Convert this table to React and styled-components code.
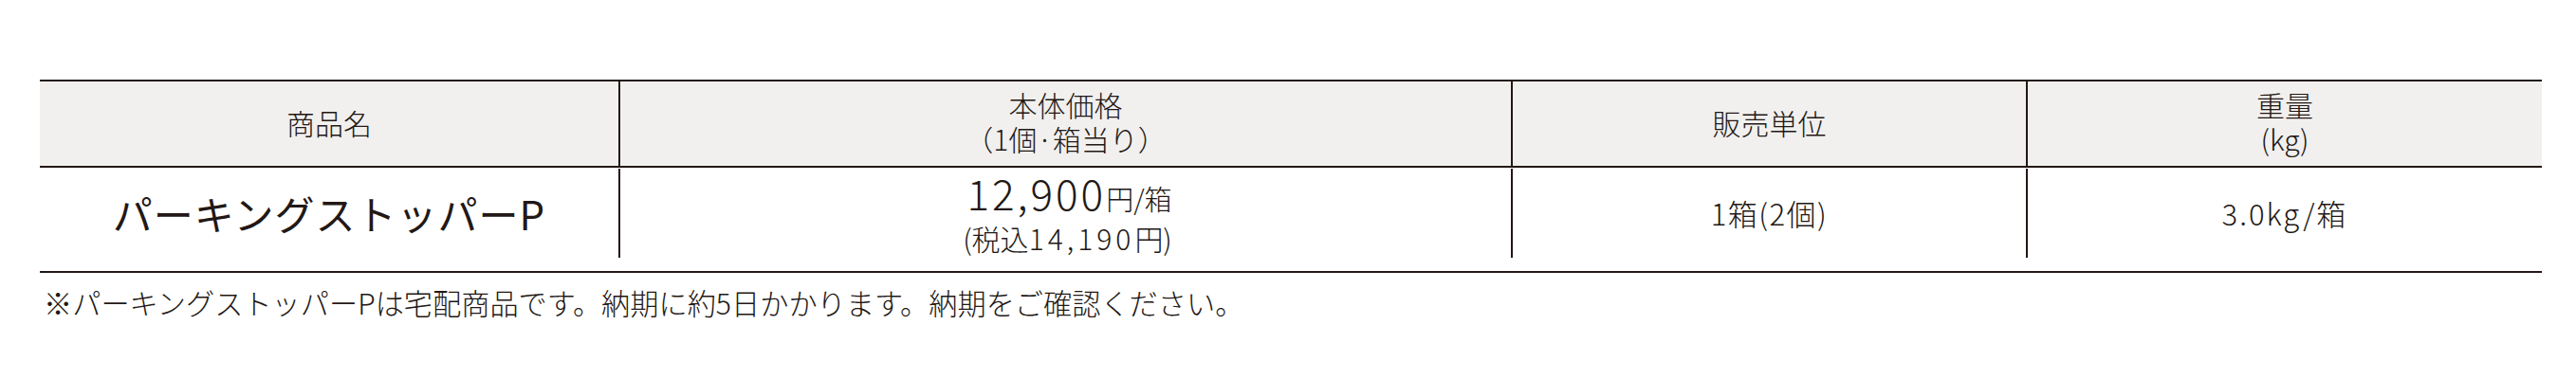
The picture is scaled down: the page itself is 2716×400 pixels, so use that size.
import React from 'react';
import styled, { createGlobalStyle } from 'styled-components';

const GlobalStyle = createGlobalStyle`
    html, body {
        margin: 0;
        padding: 0;
        background: #ffffff;
    }
    body {
        font-family: "Noto Sans CJK JP", "Noto Sans", sans-serif;
        color: #231815;
    }
`;

const Page = styled.div`
    width: 2716px;
    height: 400px;
    padding: 84px 0 0 42px;
    box-sizing: border-box;
`;

const Table = styled.div`
    width: 2638px;
    border-top: 2px solid #231815;
    border-bottom: 2px solid #231815;
`;

const Row = styled.div`
    display: grid;
    grid-template-columns: 610px 941px 543px 544px;
    background: ${(p) => (p.$head ? '#f1f0ef' : '#ffffff')};
    height: ${(p) => (p.$head ? '89px' : '94px')};
    padding-bottom: ${(p) => (p.$head ? '0' : '14px')};
    border-bottom: ${(p) => (p.$head ? '2px solid #231815' : 'none')};
    padding-top: ${(p) => (p.$head ? '0' : '1px')};
`;

const Cell = styled.div`
    display: flex;
    flex-direction: column;
    align-items: center;
    justify-content: center;
    text-align: center;
    border-left: ${(p) => (p.$first ? 'none' : '2px solid #231815')};
    font-weight: 300;
    font-size: ${(p) => p.$size || '30px'};
    line-height: 36px;
    letter-spacing: ${(p) => p.$ls || '0'};
    padding-bottom: ${(p) => p.$lift || '0'};
    white-space: nowrap;
`;

const HeadLine = styled.div`
    height: 36px;
`;

const ProductName = styled.span`
    font-size: 42px;
    font-weight: 400;
    line-height: 46px;
    letter-spacing: 1px;
`;

const PriceLine = styled.div`
    display: flex;
    align-items: baseline;
    line-height: 46px;
    padding-left: 8px;
`;

const BigNum = styled.span`
    font-size: 44px;
    letter-spacing: 3px;
    font-weight: 300;
`;

const Unit = styled.span`
    font-size: 29px;
    font-weight: 300;
`;

const TaxLine = styled.div`
    font-size: 30px;
    line-height: 38px;
    font-weight: 300;
    padding-left: 4px;
`;

const TaxNum = styled.span`
    letter-spacing: 4px;
`;

const Note = styled.p`
    margin: 12px 0 0 4px;
    font-size: 30.2px;
    font-weight: 300;
    line-height: 38px;
    white-space: nowrap;
`;

export default function App() {
    return (
        <>
            <GlobalStyle />
            <Page>
                <Table>
                    <Row $head>
                        <Cell $first $lift="3px">商品名</Cell>
                        <Cell $lift="5px">
                            <HeadLine>本体価格</HeadLine>
                            <HeadLine>（1個·箱当り）</HeadLine>
                        </Cell>
                        <Cell $lift="3px">販売単位</Cell>
                        <Cell $lift="5px">
                            <HeadLine>重量</HeadLine>
                            <HeadLine>(kg)</HeadLine>
                        </Cell>
                    </Row>
                    <Row>
                        <Cell $first>
                            <ProductName>パーキングストッパーP</ProductName>
                        </Cell>
                        <Cell>
                            <PriceLine>
                                <BigNum>12,900</BigNum>
                                <Unit>円/箱</Unit>
                            </PriceLine>
                            <TaxLine>
                                (税込<TaxNum>14,190</TaxNum>円)
                            </TaxLine>
                        </Cell>
                        <Cell $size="31px" $ls="1.5px">1箱(2個)</Cell>
                        <Cell $size="31px" $ls="2px">3.0kg/箱</Cell>
                    </Row>
                </Table>
                <Note>※パーキングストッパーPは宅配商品です。納期に約5日かかります。納期をご確認ください。</Note>
            </Page>
        </>
    );
}
